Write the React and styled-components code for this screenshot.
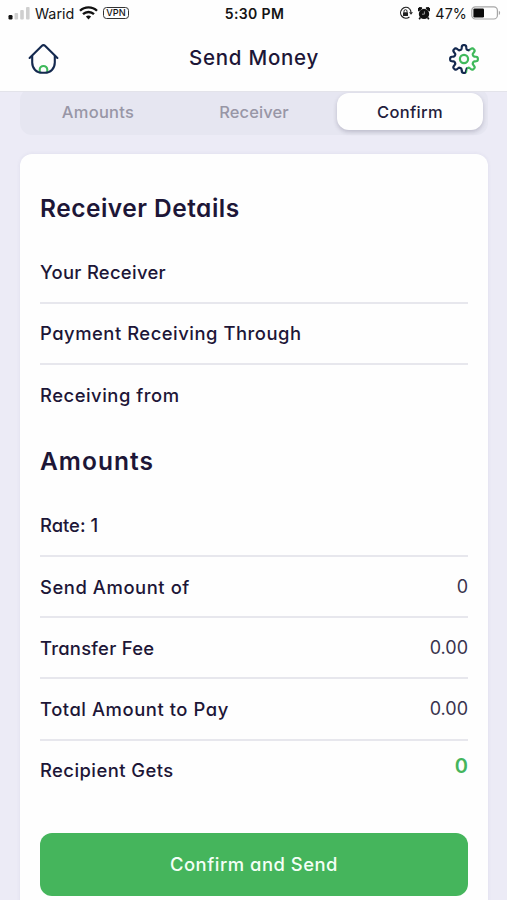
import React from 'react';
import styled, { createGlobalStyle } from 'styled-components';

const GlobalStyle = createGlobalStyle`
  * {
    box-sizing: border-box;
  }

  body {
    margin: 0;
    background: #ecebf6;
    overflow: hidden;
    font-family: Inter, 'Open Sans', sans-serif;
    font-feature-settings: 'cv11';
    color: #1d1637;
  }
`;

const Screen = styled.div`
  width: 100%;
  height: 900px;
  display: flex;
  flex-direction: column;
  overflow: hidden;
  background: #ecebf6;
`;

const Top = styled.div`
  height: 92px;
  flex-shrink: 0;
  background: #fefefe;
  border-bottom: 1px solid #e3e3ea;
`;

const StatusBar = styled.div`
  height: 26px;
  display: grid;
  grid-template-columns: 1fr auto 1fr;
  align-items: center;
  padding: 0 6px 0 8px;
  color: #141414;
  font-size: 14.3px;
  font-feature-settings: normal;
`;

const StatusGroup = styled.div`
  display: flex;
  align-items: center;
  justify-content: ${({ $end }) => ($end ? 'flex-end' : 'flex-start')};
  gap: ${({ $gap }) => $gap}px;
`;

const Clock = styled.span`
  font-weight: 600;
  font-size: 14px;
  letter-spacing: 0.35px;
`;

const Carrier = styled.span`
  margin-left: -1px;
`;

const Vpn = styled.span`
  height: 12px;
  padding: 0 2px;
  border: 1px solid #333;
  border-radius: 3.5px;
  font-size: 9.2px;
  line-height: 10.5px;
  font-weight: 500;
`;

const Percent = styled.span`
  margin-right: -1px;
  letter-spacing: 0.1px;
`;

const Header = styled.header`
  height: 65px;
  display: grid;
  grid-template-columns: 32px 1fr 32px;
  align-items: center;
  padding: 0 27px 0 28px;
`;

const HeaderTitle = styled.h1`
  margin: -2px 0 0;
  text-align: center;
  font-size: 20.5px;
  line-height: 24px;
  font-weight: 500;
  letter-spacing: ${({ $track }) => $track}px;
`;

const Body = styled.main`
  flex: 1;
  min-height: 0;
  overflow: hidden;
  padding: 0 19px 0 20px;
`;

const Tabs = styled.nav`
  display: grid;
  grid-template-columns: repeat(3, 1fr);
  height: 47px;
  margin-top: -4px;
  padding: 5px 0;
  border-radius: 12px;
  background: #e6e6f1;
`;

const Tab = styled.div`
  display: flex;
  align-items: center;
  justify-content: center;
  margin: 0 5px;
  border-radius: 12px;
  font-size: 16.5px;
  font-weight: 500;
  letter-spacing: ${({ $track }) => $track}px;
  color: ${({ $active }) => ($active ? '#241d3c' : '#9896a6')};
  background: ${({ $active }) => ($active ? '#fefefe' : 'transparent')};
  box-shadow: ${({ $active }) => ($active ? '0 2px 4px rgba(40, 36, 70, 0.22)' : 'none')};
`;

const Card = styled.section`
  height: 800px;
  margin-top: 19px;
  padding: 24px 20px 0;
  border-radius: 12px;
  background: #fefefe;
  box-shadow: 0 0 4px rgba(60, 50, 110, 0.07);
`;

const SectionTitle = styled.h2`
  height: 64.6px;
  margin: ${({ $spaced }) => ($spaced ? '5px 0 0' : '0')};
  padding-top: 14px;
  font-size: 24.5px;
  line-height: 32px;
  font-weight: 600;
  letter-spacing: ${({ $track }) => $track}px;
`;

const Row = styled.div`
  display: flex;
  align-items: center;
  justify-content: space-between;
  height: 61.2px;
  border-bottom: 2px solid ${({ $last }) => ($last ? 'transparent' : '#e7e7ed')};
  font-size: 18.4px;
  font-weight: 500;
`;

const Label = styled.span`
  letter-spacing: ${({ $track }) => $track}px;
`;

const Value = styled.span`
  font-size: ${({ $total }) => ($total ? 20 : 18)}px;
  font-weight: ${({ $total }) => ($total ? 600 : 400)};
  color: ${({ $total }) => ($total ? '#45b55c' : '#39334e')};
  padding-bottom: ${({ $total }) => ($total ? 9 : 0)}px;
`;

const SubmitButton = styled.button`
  display: block;
  width: 100%;
  height: 63px;
  margin-top: 31px;
  padding: 0 0 1px;
  border: 0;
  border-radius: 12px;
  background: #45b55c;
  color: #f4fff6;
  font: inherit;
  font-size: 18.4px;
  font-weight: 500;
  letter-spacing: ${({ $track }) => $track}px;
`;

const SignalIcon = () => (
  <svg width="23" height="14" viewBox="0 0 23 14">
    <rect x="0.5" y="9" width="4" height="4.5" rx="1.2" fill="#111" />
    <rect x="6.5" y="7" width="3.6" height="6.5" rx="1" fill="#cfcfcf" />
    <rect x="12.2" y="4" width="3.6" height="9.5" rx="1" fill="#cfcfcf" />
    <rect x="18" y="1" width="3.6" height="12.5" rx="1" fill="#cfcfcf" />
  </svg>
);

const WifiIcon = () => (
  <svg width="19" height="14" viewBox="0 0 19 14" fill="none" stroke="#111" strokeWidth="2.3">
    <path d="M1 4.8a12.2 12.2 0 0 1 17 0" />
    <path d="M4 8.2a8 8 0 0 1 11 0" />
    <path d="M6.9 10.6a4 4 0 0 1 5.2 0L9.5 13.4z" fill="#111" stroke="none" />
  </svg>
);

const LockIcon = () => (
  <svg width="14" height="14" viewBox="0 0 14 14" fill="none" stroke="#222" strokeWidth="1.2">
    <path d="M10.4 2.6A5.4 5.4 0 1 0 10.4 11" />
    <path d="M10.4 2.6A5.4 5.4 0 0 1 12 6.4" />
    <path d="M10 6.2h4l-2 2.6z" fill="#222" stroke="none" />
    <rect x="4" y="6.2" width="5" height="3.8" rx="0.6" fill="#222" stroke="none" />
    <path d="M5 6.5V5.2a1.5 1.5 0 0 1 3 0v1.3" strokeWidth="1" />
  </svg>
);

const AlarmIcon = () => (
  <svg width="12" height="13" viewBox="0 0 12 13">
    <circle cx="6" cy="6.9" r="5.2" fill="#111" />
    <path d="M0.6 4a2.2 2.2 0 0 1 3.5-2.8zM11.4 4a2.2 2.2 0 0 0-3.5-2.8z" fill="#111" stroke="#111" strokeWidth="1" />
    <path d="M2.4 10.4l-1.2 1.8M9.6 10.4l1.2 1.8" stroke="#111" strokeWidth="1.7" />
    <path d="M6.4 4.4v2.8H4" fill="none" stroke="#bbb" strokeWidth="0.8" />
  </svg>
);

const BatteryIcon = () => (
  <svg width="30" height="14" viewBox="0 0 30 14">
    <rect x="0.8" y="0.8" width="25.6" height="12.2" rx="3.6" fill="none" stroke="#a6a6a6" strokeWidth="1.2" />
    <rect x="2.4" y="2.4" width="10.6" height="9" rx="1.2" fill="#0b0b0b" />
    <path d="M27.8 4.8c1.8.6 1.8 3.6 0 4.2z" fill="#a6a6a6" />
  </svg>
);

const HomeIcon = () => (
  <svg width="31" height="32" viewBox="0 0 31 32" fill="none" strokeWidth="2.1" strokeLinecap="round" strokeLinejoin="round">
    <path d="M11.7 29v-2.2a3.8 3.8 0 0 1 7.6 0V29" stroke="#3fb95b" />
    <path d="M4.2 13v6.6c0 6 4.4 10.2 10 10.2h2.6c5.6 0 10-4.2 10-10.2V13" stroke="#14294f" />
    <path d="M1.6 15L14 2.8a2.1 2.1 0 0 1 3 0L29.4 15" stroke="#14294f" />
  </svg>
);

// eight rounded teeth around a 32x32 centre
const gearPoints = Array.from({ length: 240 }, (_, i) => {
  const angle = (i / 240) * Math.PI * 2;
  const radius = 11.8 + 2.1 * Math.tanh(2.2 * Math.cos(angle * 8));
  return `${(16 + radius * Math.cos(angle)).toFixed(2)},${(16 + radius * Math.sin(angle)).toFixed(2)}`;
}).join(' ');

const GearIcon = () => (
  <svg width="32" height="32" viewBox="0 0 32 32" fill="none" strokeWidth="2.2">
    <defs>
      <linearGradient id="gear" x1="0" y1="0" x2="1" y2="0.15">
        <stop offset="0.7" stopColor="#14294f" />
        <stop offset="0.72" stopColor="#3fb95b" />
      </linearGradient>
    </defs>
    <polygon points={gearPoints} stroke="url(#gear)" strokeLinejoin="round" />
    <circle cx="16" cy="16" r="4.1" stroke="#3fb95b" />
  </svg>
);

const receiverRows = [
  { label: 'Your Receiver', track: 0.3 },
  { label: 'Payment Receiving Through', track: 0.52 },
  { label: 'Receiving from', track: 0.52 },
];

const amountRows = [
  { label: 'Rate: 1', track: 0 },
  { label: 'Send Amount of', value: '0', track: 0.57 },
  { label: 'Transfer Fee', value: '0.00', track: 0.26 },
  { label: 'Total Amount to Pay', value: '0.00', track: 0.56 },
  { label: 'Recipient Gets', value: '0', total: true, track: 0.45 },
];

const DetailRow = ({ label, value, total, track, last }) => (
  <Row $last={last}>
    <Label $track={track}>{label}</Label>
    {value && <Value $total={total}>{value}</Value>}
  </Row>
);

const App = () => {
  return (
    <>
      <GlobalStyle />
      <Screen>
        <Top>
          <StatusBar>
            <StatusGroup $gap={5}>
              <SignalIcon />
              <Carrier>Warid</Carrier>
              <WifiIcon />
              <Vpn>VPN</Vpn>
            </StatusGroup>
            <Clock>5:30 PM</Clock>
            <StatusGroup $gap={5} $end>
              <LockIcon />
              <AlarmIcon />
              <Percent>47%</Percent>
              <BatteryIcon />
            </StatusGroup>
          </StatusBar>
          <Header>
            <HomeIcon />
            <HeaderTitle $track={0.75}>Send Money</HeaderTitle>
            <GearIcon />
          </Header>
        </Top>
        <Body>
          <Tabs>
            <Tab $track={0.3}>Amounts</Tab>
            <Tab $track={0.1}>Receiver</Tab>
            <Tab $active $track={0.3}>Confirm</Tab>
          </Tabs>
          <Card>
            <SectionTitle $track={0.49}>Receiver Details</SectionTitle>
            {receiverRows.map((row, i) => (
              <DetailRow key={row.label} {...row} last={i === receiverRows.length - 1} />
            ))}
            <SectionTitle $spaced $track={1.05}>Amounts</SectionTitle>
            {amountRows.map((row, i) => (
              <DetailRow key={row.label} {...row} last={i === amountRows.length - 1} />
            ))}
            <SubmitButton $track={0.52}>Confirm and Send</SubmitButton>
          </Card>
        </Body>
      </Screen>
    </>
  );
};

export default App;
